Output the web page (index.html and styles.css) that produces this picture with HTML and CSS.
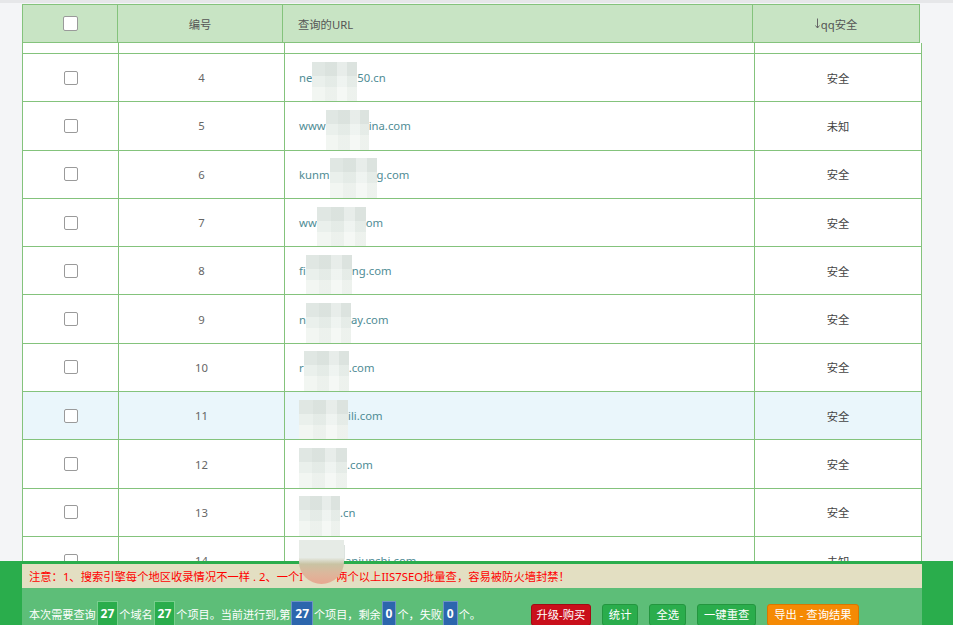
FILE: index.html
```html
<!DOCTYPE html>
<html lang="zh-CN">
<head>
<meta charset="utf-8">
<title>查询结果</title>
<link rel="stylesheet" href="styles.css">
</head>
<body>
<div class="topbar"></div>
<div class="wrap">
  <div class="thead">
    <div class="hcell"><span class="cb"></span></div>
    <div class="hcell">编号</div>
    <div class="hcell url">查询的URL</div>
    <div class="hcell"><svg class="arrow" width="5" height="11" viewBox="0 0 5 11"><path d="M2.5 0.5V10M0.5 7.5L2.5 10L4.5 7.5" fill="none" stroke="#666" stroke-width="1"/></svg>qq安全</div>
  </div>
  <div class="tbody">
    <div class="row partial"><div class="cell"></div><div class="cell"></div><div class="cell"></div><div class="cell"></div></div>
    <div class="row"><div class="cell"><span class="cb"></span></div><div class="cell num">4</div><div class="cell url">ne<span class="mask w45"></span>50.cn</div><div class="cell st">安全</div></div>
    <div class="row"><div class="cell"><span class="cb"></span></div><div class="cell num">5</div><div class="cell url">www<span class="mask w43"></span>ina.com</div><div class="cell st">未知</div></div>
    <div class="row"><div class="cell"><span class="cb"></span></div><div class="cell num">6</div><div class="cell url">kunm<span class="mask w47"></span>g.com</div><div class="cell st">安全</div></div>
    <div class="row"><div class="cell"><span class="cb"></span></div><div class="cell num">7</div><div class="cell url">ww<span class="mask w49"></span>om</div><div class="cell st">安全</div></div>
    <div class="row"><div class="cell"><span class="cb"></span></div><div class="cell num">8</div><div class="cell url">fi<span class="mask w46"></span>ng.com</div><div class="cell st">安全</div></div>
    <div class="row"><div class="cell"><span class="cb"></span></div><div class="cell num">9</div><div class="cell url">n<span class="mask w45"></span>ay.com</div><div class="cell st">安全</div></div>
    <div class="row"><div class="cell"><span class="cb"></span></div><div class="cell num">10</div><div class="cell url">r<span class="mask w45"></span>.com</div><div class="cell st">安全</div></div>
    <div class="row hl"><div class="cell"><span class="cb"></span></div><div class="cell num">11</div><div class="cell url"><span class="mask w49"></span>ili.com</div><div class="cell st">安全</div></div>
    <div class="row"><div class="cell"><span class="cb"></span></div><div class="cell num">12</div><div class="cell url"><span class="mask w48"></span>.com</div><div class="cell st">安全</div></div>
    <div class="row"><div class="cell"><span class="cb"></span></div><div class="cell num">13</div><div class="cell url"><span class="mask w41"></span>.cn</div><div class="cell st">安全</div></div>
    <div class="row"><div class="cell"><span class="cb"></span></div><div class="cell num">14</div><div class="cell url"><span class="mask w46"></span>anjunshi.com</div><div class="cell st">未知</div></div>
  </div>
</div>
<div class="footer">
  <div class="footer-in">
    <div class="notice">注意：1、搜索引擎每个地区收录情况不一样 . 2、一个I<span class="nmask"></span>两个以上IIS7SEO批量查，容易被防火墙封禁！</div>
    <div class="panel">
      <div class="info">本次需要查询<b class="badge g">27</b>个域名<b class="badge g">27</b>个项目。当前进行到,第<b class="badge b">27</b>个项目，剩余<b class="badge b">0</b>个，失败<b class="badge b">0</b>个。</div>
      <div class="btns">
        <span class="btn red">升级-购买</span>
        <span class="btn green">统计</span>
        <span class="btn green">全选</span>
        <span class="btn green">一键重查</span>
        <span class="btn orange">导出 - 查询结果</span>
      </div>
    </div>
  </div>
</div>
</body>
</html>
```

FILE: styles.css
```css
* { box-sizing: border-box; }
html, body { height: 100%; }
body {
  margin: 0;
  background: #f4f5f7;
  font-family: "Noto Sans", "Noto Sans CJK SC", sans-serif;
  font-size: 11.3px;
  color: #555;
  overflow: hidden;
}
.topbar { height: 3px; background: #e6e7e9; }
.wrap { margin: 1px 0 0 22px; width: 900px; }

.thead {
  display: grid;
  grid-template-columns: 95px 165px 470px 167px;
  width: 898px;
  border-top: 1px solid #84c37c;
  border-left: 1px solid #84c37c;
  background: #c8e4c4;
}
.hcell {
  height: 38px;
  border-right: 1px solid #84c37c;
  border-bottom: 1px solid #84c37c;
  display: flex;
  align-items: center;
  justify-content: center;
  color: #555;
}
.hcell.url { justify-content: flex-start; padding-left: 15px; }
.arrow { display: block; margin-right: 1px; }

.tbody { background: #fff; width: 900px; }
.row {
  display: grid;
  grid-template-columns: 96px 166px 470px 167px;
  border-left: 1px solid #84c37c;
  height: 48.3px;
}
.row.partial { height: 11px; }
.cell {
  border-right: 1px solid #84c37c;
  border-bottom: 1px solid #84c37c;
  display: flex;
  align-items: center;
  justify-content: center;
  overflow: hidden;
  white-space: nowrap;
}
.row.hl .cell { background: #eaf6fb; }
.cell.num { color: #666; }
.cell.st { color: #444; }
.cell.url { justify-content: flex-start; padding-left: 14px; color: #4f8c95; }

.cb {
  display: inline-block;
  width: 14px;
  height: 14px;
  border: 1px solid #9a9a9a;
  border-radius: 2px;
  background: #fff;
}
.thead .cb { width: 15px; height: 15px; }

.mask {
  display: inline-block;
  height: 46px;
  margin-top: 14px;
  background:
    linear-gradient(90deg, rgba(255,255,255,0) 0 28%, rgba(0,40,20,0.025) 28% 55%, rgba(255,255,255,0.25) 55% 78%, rgba(0,30,10,0.02) 78%),
    linear-gradient(180deg, #e0e7e3 0 30%, #eaf0ec 30% 55%, #f2f6f2 55% 100%);
}
.w41 { width: 41px; } .w43 { width: 43px; } .w45 { width: 45px; }
.w46 { width: 46px; } .w47 { width: 47px; } .w48 { width: 48px; } .w49 { width: 49px; }

.footer {
  position: fixed;
  left: 0;
  right: 0;
  top: 561px;
  background: #2aad4c;
  padding-top: 3px;
}
.footer-in { margin-left: 22px; width: 900px; }
.notice {
  height: 24px;
  background: #e3dfc2;
  color: #ff0000;
  padding-left: 7px;
  display: flex;
  align-items: center;
  white-space: nowrap;
}
.nmask {
  display: inline-block;
  width: 33px;
  height: 24px;
  position: relative;
}
.nmask::before {
  content: "";
  position: absolute;
  left: -4px;
  right: -8px;
  top: -24px;
  bottom: 4px;
  border-radius: 0 0 50% 50%;
  background: linear-gradient(180deg, #e6ebe6 0 40%, #c9c3a3 55%, #dcb79c 75%, #e8a891 100%);
}
.panel {
  background: #5dbe78;
  padding: 13px 0 10px 7px;
  display: flex;
  align-items: flex-start;
}
.info {
  width: 502px;
  height: 26px;
  display: flex;
  align-items: center;
  white-space: nowrap;
  color: #fff;
  font-size: 11.1px;
}
.badge {
  display: block;
  height: 26px;
  line-height: 24px;
  padding: 0 3px;
  margin: 0 1px;
  border: 1px solid rgba(255,255,255,0.3);
  font-family: "Noto Sans", sans-serif;
  font-weight: bold;
  font-size: 12px;
  color: #fff;
}
.badge.g { background: #2aad4c; border-color: #78cf8e; }
.badge.b { background: #2c66ad; border-color: #6d93c4; }
.btns { display: flex; gap: 11px; margin-top: 3px; }
.btn {
  height: 22px;
  line-height: 20px;
  padding: 0 6px;
  border: 1px solid;
  border-radius: 3px;
  color: #fff;
  white-space: nowrap;
}
.btn.red { background: #c90f1b; border-color: #a30a14; padding: 0 4.5px; }
.btn.green { background: #2aad4c; border-color: #23963f; }
.btn.orange { background: #f58a04; border-color: #d97700; }
```
